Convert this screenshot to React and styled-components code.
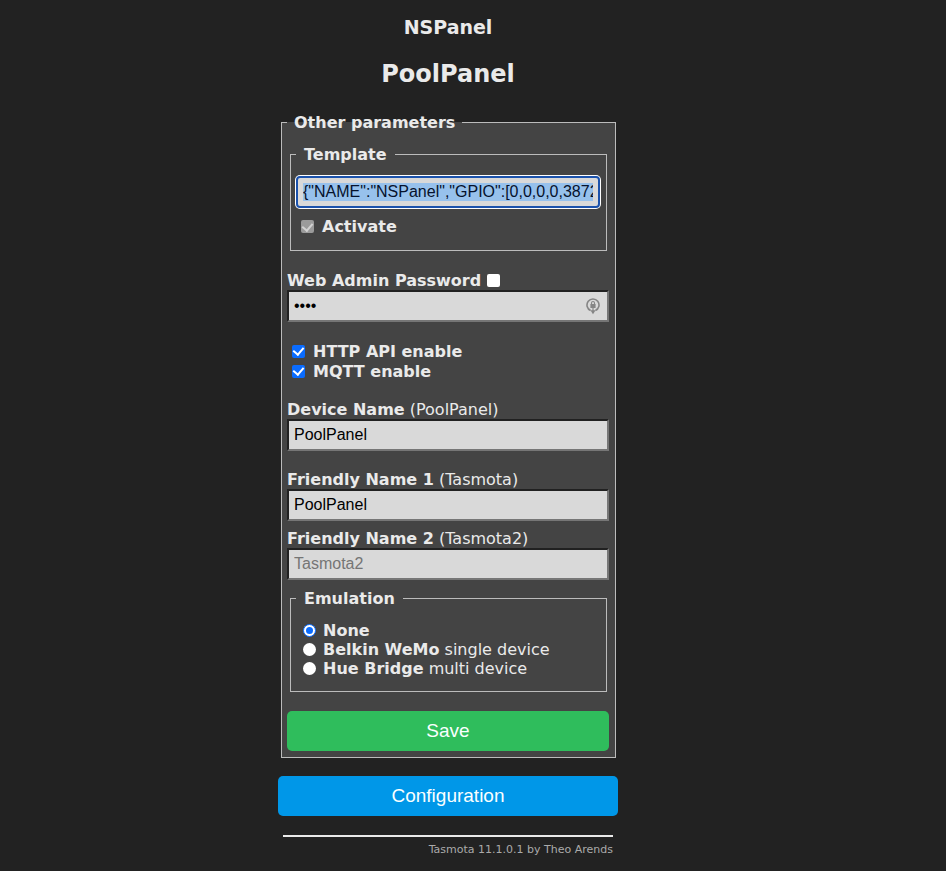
import React, { useEffect, useRef, useState } from 'react'
import styled, { createGlobalStyle, css } from 'styled-components'

const App = () => {
  const template = useRef(null)
  const [showPassword, setShowPassword] = useState(false)
  const [emulation, setEmulation] = useState('none')

  useEffect(() => {
    template.current.focus({ preventScroll: true })
    template.current.setSelectionRange(0, template.current.value.length, 'backward')
    template.current.scrollLeft = 0
  }, [])

  return (
    <Page>
      <GlobalStyle />
      <Content>
        <Module>NSPanel</Module>
        <Device>PoolPanel</Device>
        <Parameters>
          <Legend>Other parameters</Legend>
          <Group>
            <GroupLegend>Template</GroupLegend>
            <TemplateInput
              ref={template}
              aria-label="Template"
              defaultValue={'{"NAME":"NSPanel","GPIO":[0,0,0,0,3872,0,0,0,0,0,32,0,0,0,0,225,0,480,224,1,0,0,0,33,0,0,0,0,0,0,0,0,0,0,4736,4737],"FLAG":0,"BASE":1}'}
            />
            <Option>
              <Checkbox defaultChecked disabled />
              <b>Activate</b>
            </Option>
          </Group>

          <Field>
            <LabelRow>
              <label htmlFor="wp"><b>Web Admin Password</b></label>
              <ShowCheckbox
                aria-label="Show password"
                checked={showPassword}
                onChange={(e) => setShowPassword(e.target.checked)}
              />
            </LabelRow>
            <PasswordBox>
              <Input id="wp" type={showPassword ? 'text' : 'password'} defaultValue="pool" />
              <LockIcon viewBox="0 0 14 18" aria-hidden="true">
                <path d="M4.6 13.5A6 6 0 1 1 9.4 13.5" fill="none" stroke="#858585" strokeWidth="1.6" />
                <path d="M5.5 7.4V6a1.5 1.5 0 0 1 3 0v1.4" fill="none" stroke="#858585" strokeWidth="1.1" />
                <rect x="4.4" y="7" width="5.2" height="4" rx="0.5" fill="#858585" />
                <path d="M7 11v3" fill="none" stroke="#858585" strokeWidth="1.2" />
                <path d="M4.4 13.2h5.2L7 17.2z" fill="#858585" />
              </LockIcon>
            </PasswordBox>
          </Field>

          <Options>
            <Option $tall>
              <Checkbox defaultChecked />
              <b>HTTP API enable</b>
            </Option>
            <Option $tall>
              <Checkbox defaultChecked />
              <b>MQTT enable</b>
            </Option>
          </Options>

          <Field>
            <label htmlFor="dn"><b>Device Name</b> (PoolPanel)</label>
            <Input id="dn" defaultValue="PoolPanel" />
          </Field>
          <Field>
            <label htmlFor="f1"><b>Friendly Name 1</b> (Tasmota)</label>
            <Input id="f1" defaultValue="PoolPanel" />
          </Field>
          <Field $close>
            <label htmlFor="f2"><b>Friendly Name 2</b> (Tasmota2)</label>
            <Input id="f2" placeholder="Tasmota2" />
          </Field>

          <EmulationGroup>
            <GroupLegend>Emulation</GroupLegend>
            {emulations.map((item) => (
              <Option key={item.id}>
                <Radio
                  name="b2"
                  checked={emulation === item.id}
                  onChange={() => setEmulation(item.id)}
                />
                <span><b>{item.name}</b> {item.note}</span>
              </Option>
            ))}
          </EmulationGroup>
          <SaveButton type="submit">Save</SaveButton>
        </Parameters>
        <ConfigButton type="button">Configuration</ConfigButton>
        <Footer>
          <a href="https://bit.ly/tasmota">Tasmota 11.1.0.1 by Theo Arends</a>
        </Footer>
      </Content>
    </Page>
  )
}

export default App

const emulations = [
  { id: 'none', name: 'None', note: '' },
  { id: 'wemo', name: 'Belkin WeMo', note: 'single device' },
  { id: 'hue', name: 'Hue Bridge', note: 'multi device' },
]

const GlobalStyle = createGlobalStyle`
*{
box-sizing:border-box;
}
body{
margin:0;
background:#222222;
color:#eaeaea;
font-family:Verdana,"DejaVu Sans",sans-serif;
font-size:16px;
line-height:19px;
}
`
const Page = styled.main`
display:flex;
justify-content:center;
padding:15px 50px 12px 0;
`
const Content = styled.div`
width:100%;
max-width:340px;
`
const Module = styled.h3`
margin:0;
text-align:center;
font-size:19px;
line-height:24px;
`
const Device = styled.h2`
margin:20px 0 24px;
text-align:center;
font-size:24px;
line-height:30px;
`
const Group = styled.fieldset`
margin:0 2px 0 3px;
padding:12px 6px 14px 5px;
min-width:0;
border:1px solid #bcbcbc;
`
const Parameters = styled(Group)`
padding:13px 6px 6px 5px;
background:#444444;
`
const EmulationGroup = styled(Group)`
margin-top:9px;
padding:13px 6px 13px 5px;
`
const Legend = styled.legend`
padding:0 7px;
font-weight:700;
`
const GroupLegend = styled(Legend)`
padding:0 8px;
`
const Field = styled.div`
display:flex;
flex-direction:column;
margin-top:${(props) => (props.$close ? '8px' : '19px')};
`
const LabelRow = styled.div`
display:flex;
align-items:center;
height:20px;
`
const Input = styled.input`
display:block;
width:100%;
height:32px;
padding:5px;
border:2px inset #767676;
border-radius:0;
background:#d9d9d9;
color:#000000;
font-family:Arial,"Liberation Sans",sans-serif;
font-size:16px;
&::placeholder{
color:#757575;
}
`
const TemplateInput = styled(Input)`
margin-bottom:9px;
border:2px solid #1b52ac;
border-radius:4px;
box-shadow:0 0 0 1px #ffffff;
outline:none;
&::selection{
background:rgba(150,192,236,0.99);
color:#06122c;
}
`
const PasswordBox = styled.div`
position:relative;
`
const LockIcon = styled.svg`
position:absolute;
top:7px;
right:9px;
width:14px;
height:18px;
`
const Options = styled.div`
margin-top:19px;
`
const Option = styled.label`
display:flex;
align-items:center;
height:${(props) => (props.$tall ? '20px' : '19px')};
`
const toggle = css`
appearance:none;
display:grid;
place-items:center;
flex:none;
width:13px;
height:13px;
margin:0 8px 0 5px;
background:#ffffff;
`
const Checkbox = styled.input.attrs({ type: 'checkbox' })`
${toggle}
border-radius:2px;
&:checked{
background:#0a6cff;
}
&:checked::after{
content:'';
width:5px;
height:8px;
margin-bottom:2px;
border:solid #ffffff;
border-width:0 2px 2px 0;
transform:rotate(40deg);
}
&:disabled{
background:#9b9b9b;
}
&:disabled::after{
border-color:#d2d2d2;
}
`
const ShowCheckbox = styled(Checkbox)`
margin:0 6px;
`
const Radio = styled.input.attrs({ type: 'radio' })`
${toggle}
margin:0 7px;
border-radius:50%;
&:checked{
border:1px solid #0a6cff;
}
&:checked::after{
content:'';
width:7px;
height:7px;
border-radius:50%;
background:#0a6cff;
}
`
const Button = styled.button`
display:block;
width:100%;
height:40px;
padding:0;
border:0;
border-radius:5px;
color:#faffff;
font-family:Arial,"Liberation Sans",sans-serif;
font-size:19px;
cursor:pointer;
`
const SaveButton = styled(Button)`
margin-top:19px;
background:#2fbd5c;
`
const ConfigButton = styled(Button)`
margin-top:18px;
background:#0097e8;
`
const Footer = styled.footer`
margin:19px 5px 0;
padding-top:3px;
border-top:2px solid #eaeaea;
text-align:right;
font-size:11px;
a{
color:#aaaaaa;
text-decoration:none;
}
`
